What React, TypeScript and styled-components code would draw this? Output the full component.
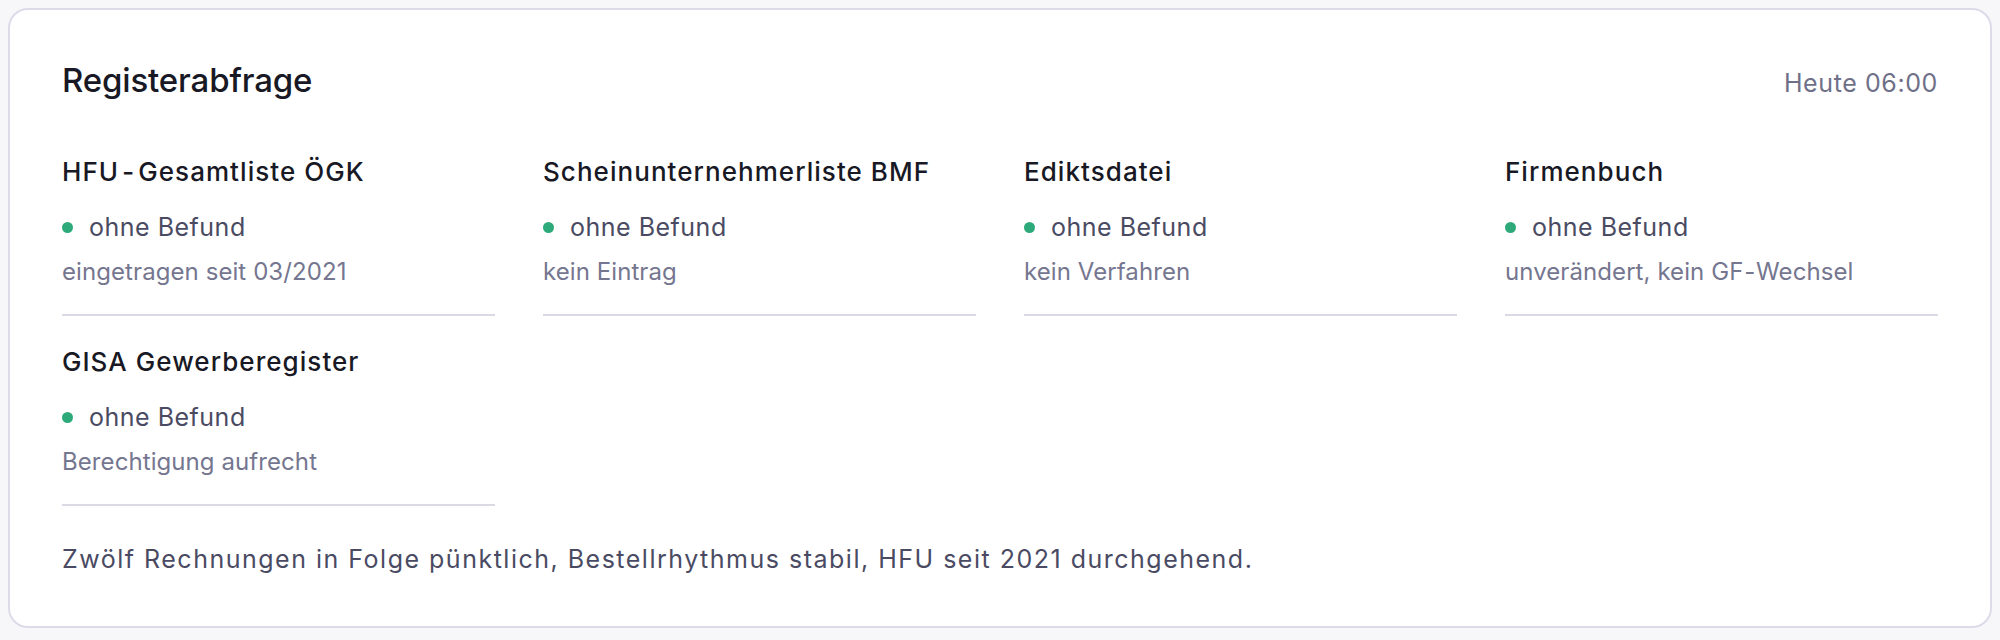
import React from "react";
import styled, { createGlobalStyle } from "styled-components";

const GlobalStyle = createGlobalStyle`
  html, body {
    margin: 0;
    padding: 0;
    background: #f7f7fa;
  }
  body {
    padding: 8px;
    font-family: Inter, "Noto Sans", sans-serif;
    -webkit-font-smoothing: antialiased;
  }
`;

const Card = styled.section`
  background: #ffffff;
  border: 2px solid #dcdce8;
  border-radius: 20px;
  padding: 50px 52px 51px;
  box-sizing: border-box;
`;

const Header = styled.header`
  display: flex;
  justify-content: space-between;
  align-items: baseline;
  margin-bottom: 56px;
`;

const Heading = styled.h2`
  margin: 0;
  font-size: 33px;
  line-height: 40px;
  font-weight: 500;
  color: #181924;
  letter-spacing: -0.15px;
`;

const Stamp = styled.span`
  font-size: 25px;
  line-height: 32px;
  color: #6f7088;
  letter-spacing: 0.6px;
`;

const Grid = styled.div`
  display: grid;
  grid-template-columns: repeat(4, 1fr);
  column-gap: 48px;
  row-gap: 30px;
`;

const Item = styled.div`
  padding-bottom: 28px;
  border-bottom: 2px solid #dadae5;
`;

const Title = styled.div`
  font-size: 26px;
  line-height: 32px;
  font-weight: 500;
  color: #181924;
  letter-spacing: 1.05px;
  margin-bottom: 23px;
`;

const Hyphen = styled.span<{ $space: number }>`
  margin: 0 ${(p) => p.$space}px;
`;

const Status = styled.div`
  display: flex;
  align-items: center;
  gap: 16px;
  font-size: 25px;
  line-height: 32px;
  color: #4a4b63;
  letter-spacing: 0.5px;
  margin-bottom: 15px;
`;

const Dot = styled.span<{ $color: string }>`
  width: 11px;
  height: 11px;
  border-radius: 50%;
  background: ${(p) => p.$color};
  flex: none;
`;

const Sub = styled.div`
  font-size: 24px;
  line-height: 28px;
  color: #75768f;
  letter-spacing: 0.08px;
`;

const Footer = styled.p`
  margin: 37px 0 0;
  font-size: 25px;
  line-height: 32px;
  color: #4a4b63;
  letter-spacing: 1.5px;
`;

const items = [
  { title: "HFU-Gesamtliste ÖGK", sub: "eingetragen seit 03/2021" },
  { title: "Scheinunternehmerliste BMF", sub: "kein Eintrag" },
  { title: "Ediktsdatei", sub: "kein Verfahren" },
  { title: "Firmenbuch", sub: "unverändert, kein GF-Wechsel" },
  { title: "GISA Gewerberegister", sub: "Berechtigung aufrecht" },
];

function withHyphens(text: string, space: number) {
  const parts = text.split("-");
  return parts.map((part, i) => (
    <React.Fragment key={i}>
      {i > 0 && <Hyphen $space={space}>{"\u2011"}</Hyphen>}
      {part}
    </React.Fragment>
  ));
}

export default function App() {
  return (
    <>
      <GlobalStyle />
      <Card>
        <Header>
          <Heading>Registerabfrage</Heading>
          <Stamp>Heute 06:00</Stamp>
        </Header>
        <Grid>
          {items.map((it) => (
            <Item key={it.title}>
              <Title>{withHyphens(it.title, 4)}</Title>
              <Status>
                <Dot $color="#2eaa7a" />
                ohne Befund
              </Status>
              <Sub>{withHyphens(it.sub, 2)}</Sub>
            </Item>
          ))}
        </Grid>
        <Footer>
          Zwölf Rechnungen in Folge pünktlich, Bestellrhythmus stabil, HFU seit 2021 durchgehend.
        </Footer>
      </Card>
    </>
  );
}
